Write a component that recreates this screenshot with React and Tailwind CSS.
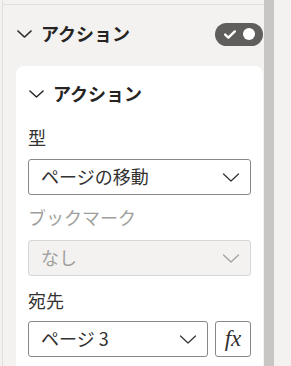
import React from "react";

const jp = { fontFamily: '"Noto Sans CJK JP", "Noto Sans", sans-serif' };

function Chevron({ className = "", stroke = "#323130", width = 1.3 }) {
  return (
    <svg viewBox="0 0 17 9" className={className} fill="none">
      <path d="M1 1 L8.5 8 L16 1" stroke={stroke} strokeWidth={width} strokeLinecap="round" strokeLinejoin="round" />
    </svg>
  );
}

function Select({ text, disabled = false, className = "" }) {
  return (
    <div
      className={
        "flex h-[36px] items-center justify-between rounded-[3px] border pl-[12px] pr-[10px] " +
        (disabled ? "border-[#d8d6d4] bg-[#f3f2f1] text-[#a19f9d] " : "border-[#8a8886] bg-white text-[#323130] ") +
        className
      }
    >
      <span className="pb-[3px] text-[18px] leading-none">{text}</span>
      <Chevron className="h-[9px] w-[18px]" stroke={disabled ? "#a19f9d" : "#323130"} width={1.2} />
    </div>
  );
}

export default function App() {
  return (
    <div className="flex h-[366px] w-[291px] overflow-hidden bg-[#f3f2f1]" style={jp}>
      <div className="ml-[2px] flex w-[262px] flex-col border-l border-[#e1dfdd]">
        <div className="mt-[4px] border-t border-[#e1dfdd]" />
        <div className="flex h-[61px] items-center justify-between pb-[3px] pl-[13px] pr-[1px]">
          <div className="flex items-center gap-[8px]">
            <Chevron className="h-[8px] w-[17px]" stroke="#323130" width={1.6} />
            <span className="pb-[2px] text-[18px] font-bold leading-none text-[#252423]">アクション</span>
          </div>
          <div className="flex h-[23px] w-[48px] items-center justify-between rounded-full bg-[#605e5c] pl-[9px] pr-[8px]">
            <svg viewBox="0 0 12 9" className="h-[9px] w-[12px]" fill="none">
              <path d="M1.2 4.6 L4.4 7.6 L10.8 1.4" stroke="white" strokeWidth="2.4" strokeLinecap="round" strokeLinejoin="round" />
            </svg>
            <div className="h-[12px] w-[12px] rounded-full bg-white" />
          </div>
        </div>
        <div className="ml-[13px] mr-[1px] flex-1 rounded-t-lg bg-white px-[12px]">
          <div className="flex h-[58px] items-center gap-[9px] pb-[2px] pl-[1px]">
            <Chevron className="h-[8px] w-[15px]" stroke="#252423" width={1.6} />
            <span className="pb-[2px] text-[18px] font-bold leading-none text-[#252423]">アクション</span>
          </div>
          <div className="flex h-[28px] items-center pb-[3px] text-[18px] leading-none text-[#323130]">型</div>
          <Select text="ページの移動" className="mt-[7px]" />
          <div className="mt-[9px] flex h-[28px] items-center pb-[3px] text-[18px] leading-none text-[#a19f9d]">ブックマーク</div>
          <Select text="なし" disabled className="mt-[8px]" />
          <div className="mt-[11px] flex h-[28px] items-center pb-[3px] text-[18px] leading-none text-[#323130]">宛先</div>
          <div className="mt-[6px] flex gap-[7px]">
            <Select text="ページ 3" className="flex-1" />
            <div className="flex h-[36px] w-[36px] items-center justify-center rounded-[3px] border border-[#8a8886] bg-white">
              <span
                className="pb-[2px] text-[23px] italic leading-none text-[#323130]"
                style={{ fontFamily: '"Liberation Serif", serif' }}
              >
                fx
              </span>
            </div>
          </div>
        </div>
      </div>
      <div className="w-[10px] bg-[#c8c6c4]" />
      <div className="flex-1 bg-[#f3f2f1]" />
    </div>
  );
}
